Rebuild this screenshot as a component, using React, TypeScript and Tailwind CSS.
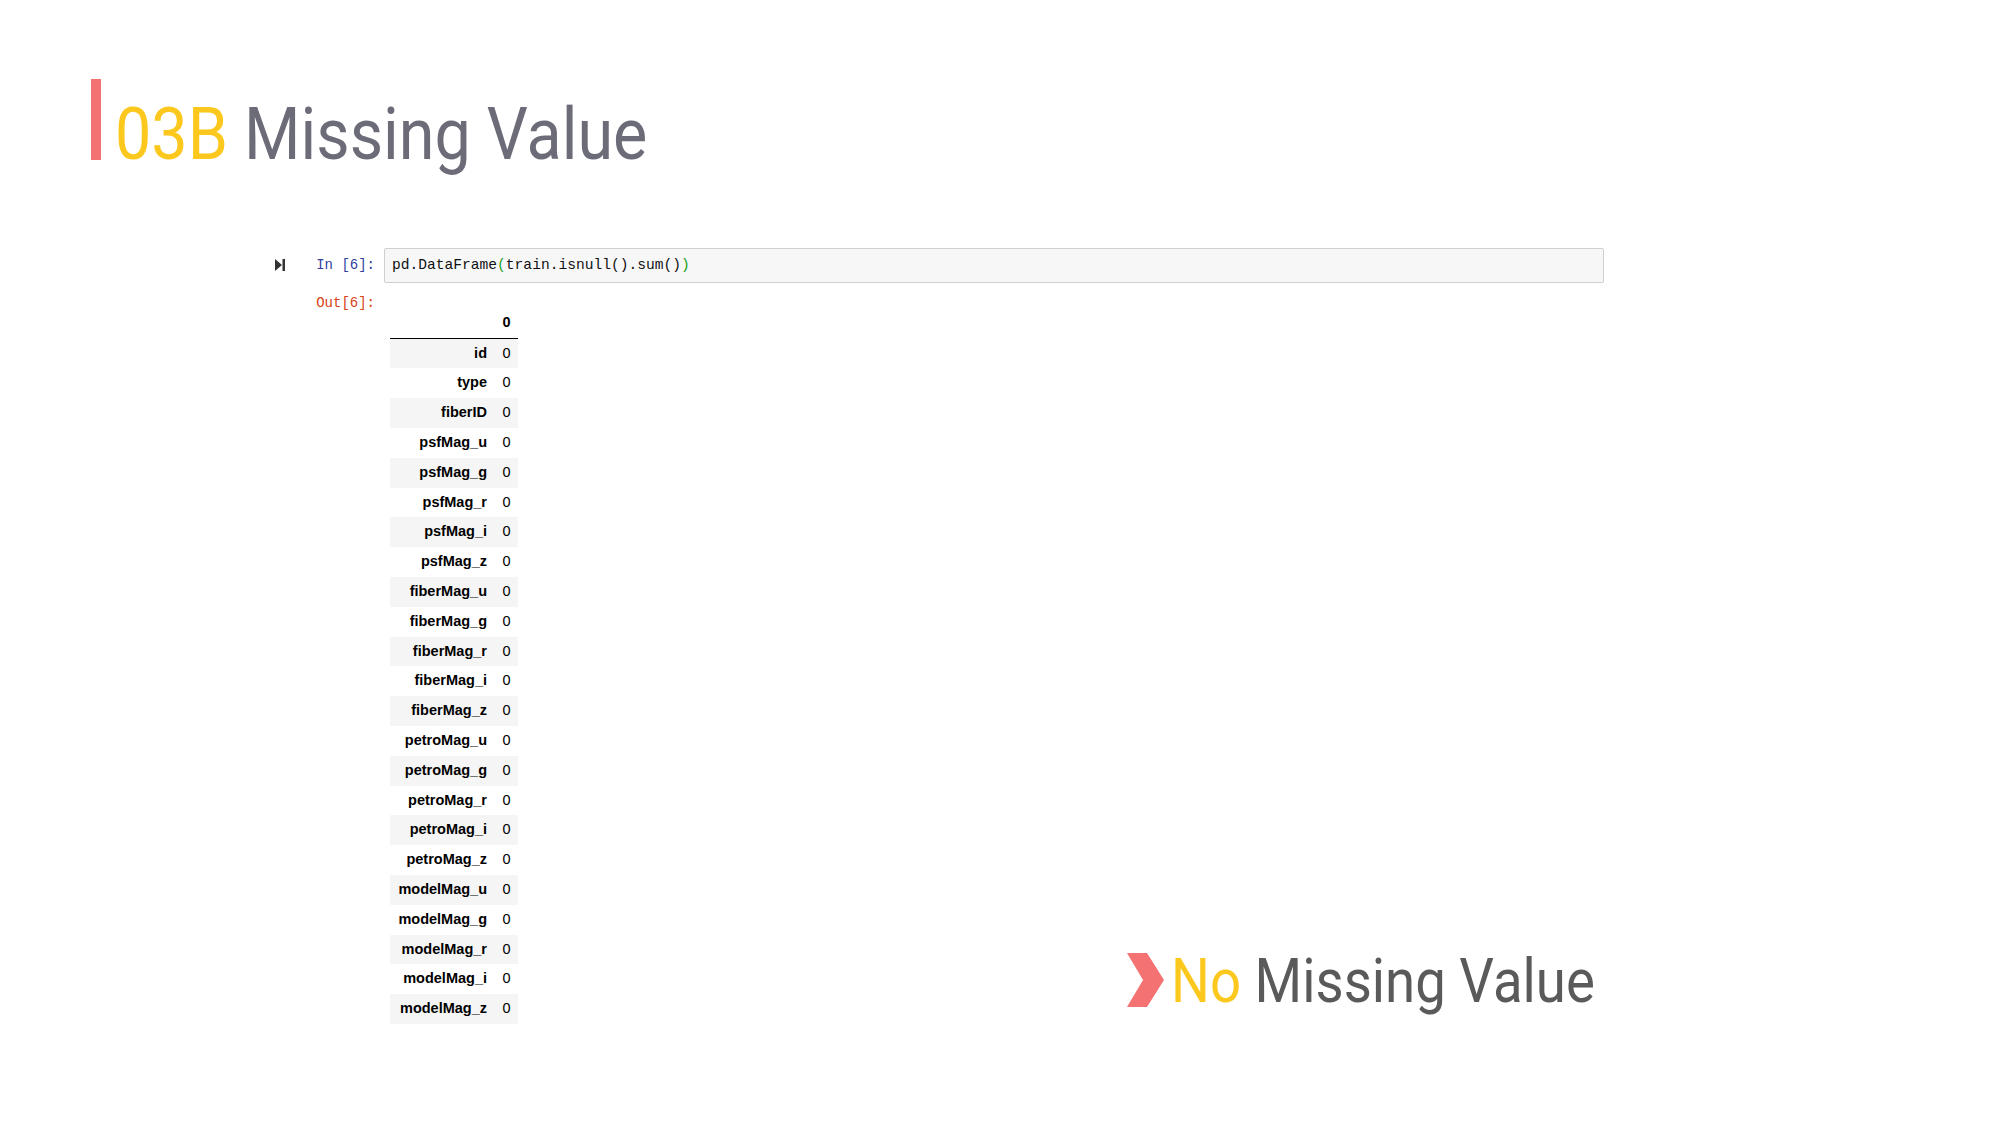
import React from "react";

const rows = [
	'id', 'type', 'fiberID',
	'psfMag_u', 'psfMag_g', 'psfMag_r', 'psfMag_i', 'psfMag_z',
	'fiberMag_u', 'fiberMag_g', 'fiberMag_r', 'fiberMag_i', 'fiberMag_z',
	'petroMag_u', 'petroMag_g', 'petroMag_r', 'petroMag_i', 'petroMag_z',
	'modelMag_u', 'modelMag_g', 'modelMag_r', 'modelMag_i', 'modelMag_z',
];

const mono = { fontFamily: '"Liberation Mono", "DejaVu Sans Mono", monospace' };

function RunIcon() {
	return (
		<svg width="10" height="12" viewBox="0 0 10 12">
			<polygon points="0,0 7,6 0,12" fill="#333" />
			<rect x="7.5" y="0" width="2.5" height="12" fill="#333" />
		</svg>
	);
}

function Chevron() {
	return (
		<svg width="37" height="54" viewBox="0 0 37 54">
			<polygon points="0,0 20,0 37,27 20,54 0,54 16,27" fill="#f47272" />
		</svg>
	);
}

function DataFrameTable() {
	return (
		<div className="w-[128px] text-[14.5px] text-black" style={{ fontFamily: '"Liberation Sans", Arial, sans-serif' }}>
			<div className="flex h-[29px] items-center">
				<div className="w-[105px]" />
				<div className="w-[23px] text-center font-bold">0</div>
			</div>
			<div className="h-px bg-black" />
			{rows.map((name, i) => (
				<div key={name} className={`flex h-[29.8px] items-center ${i % 2 === 0 ? 'bg-[#f5f5f5]' : 'bg-white'}`}>
					<div className="w-[105px] pr-[8px] text-right font-bold">{name}</div>
					<div className="w-[23px] text-center">0</div>
				</div>
			))}
		</div>
	);
}

export default function App() {
	return (
		<div className="w-[2000px] h-[1125px] bg-white overflow-hidden" style={{ fontFamily: 'Roboto, sans-serif' }}>
			{/* slide title */}
			<div className="flex items-start pt-[79px] pl-[91px]">
				<div className="w-[10px] h-[81px] bg-[#f47272]" />
				<div className="ml-[14px] mt-[18.6px] w-[460px] h-[73px]">
					<span className="inline-block origin-left scale-x-[0.886] whitespace-nowrap text-[73px] leading-none">
						<span className="text-[#fdc81e]">03B</span> <span className="text-[#6c6b78]">Missing Value</span>
					</span>
				</div>
			</div>

			{/* notebook cell */}
			<div className="ml-[275px] mt-[77px] w-[1329px]">
				<div className="flex h-[35px] items-center">
					<div className="flex w-[109px] items-center justify-between pr-[9px]">
						<RunIcon />
						<span className="text-[14px] text-[#303f9f]" style={mono}>In [6]:</span>
					</div>
					<div className="flex h-[35px] flex-1 items-center rounded-[2px] border border-[#cfcfcf] bg-[#f7f7f7] pl-[7px] pt-[2px] text-[14.6px] text-[#111]" style={mono}>
						pd.DataFrame<span className="text-[#22a022]">(</span>train.isnull().sum()<span className="text-[#22a022]">)</span>
					</div>
				</div>

				<div className="mt-[7px] flex">
					<div className="w-[109px] pr-[9px] text-right text-[14px] leading-[26px] text-[#d84315]" style={mono}>Out[6]:</div>
					<div className="flex flex-1">
						<div className="ml-[6px] pt-[19px]">
							<DataFrameTable />
						</div>
						<div className="flex flex-1 items-end justify-end pr-[11px] pb-[12px]">
							<div className="flex items-start">
								<div className="mt-[3px]"><Chevron /></div>
								<div className="ml-[7px] w-[422px] h-[62px]">
									<span className="inline-block origin-left scale-x-[0.88] whitespace-nowrap text-[62px] leading-none">
										<span className="text-[#fdc81e]">No</span> <span className="text-[#5a5a5a]">Missing Value</span>
									</span>
								</div>
							</div>
						</div>
					</div>
				</div>
			</div>
		</div>
	);
}
